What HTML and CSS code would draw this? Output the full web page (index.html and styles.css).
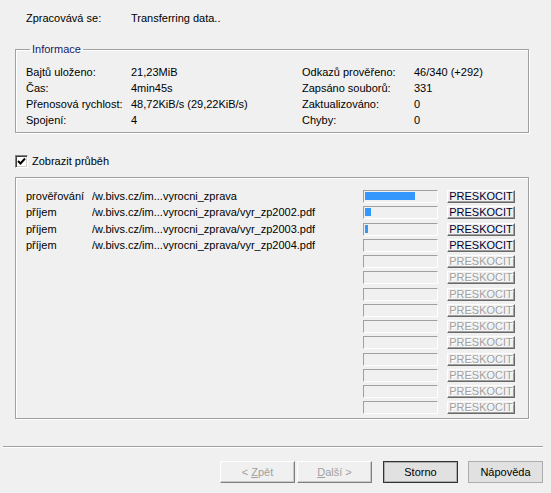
FILE: index.html
```html
<!DOCTYPE html>
<html lang="cs">
<head>
<meta charset="utf-8">
<title>Průběh</title>
<link rel="stylesheet" href="styles.css">
</head>
<body>
<div class="dialog">
  <div class="status"><span class="status-label">Zpracovává se:</span><span>Transferring data..</span></div>

  <fieldset class="info">
    <legend>Informace</legend>
    <div class="info-grid">
      <span>Bajtů uloženo:</span><span>21,23MiB</span><span>Odkazů prověřeno:</span><span>46/340 (+292)</span>
      <span>Čas:</span><span>4min45s</span><span>Zapsáno souborů:</span><span>331</span>
      <span>Přenosová rychlost:</span><span>48,72KiB/s (29,22KiB/s)</span><span>Zaktualizováno:</span><span>0</span>
      <span>Spojení:</span><span>4</span><span>Chyby:</span><span>0</span>
    </div>
  </fieldset>

  <label class="check"><span class="box"><svg width="9" height="9" viewBox="0 0 9 9"><path d="M1 4 L3.5 6.5 L8 1.5" fill="none" stroke="#000" stroke-width="2"/></svg></span>Zobrazit průběh</label>

  <div class="progress">
    <div class="row"><span class="kind">prověřování</span><span class="url">/w.bivs.cz/im...vyrocni_zprava</span><span class="bar"><span class="fill" style="width:50px"></span></span><span class="skip">PRESKOCIT</span></div>
    <div class="row"><span class="kind">příjem</span><span class="url">/w.bivs.cz/im...vyrocni_zprava/vyr_zp2002.pdf</span><span class="bar"><span class="fill" style="width:6px"></span></span><span class="skip">PRESKOCIT</span></div>
    <div class="row"><span class="kind">příjem</span><span class="url">/w.bivs.cz/im...vyrocni_zprava/vyr_zp2003.pdf</span><span class="bar"><span class="fill" style="width:3px"></span></span><span class="skip">PRESKOCIT</span></div>
    <div class="row"><span class="kind">příjem</span><span class="url">/w.bivs.cz/im...vyrocni_zprava/vyr_zp2004.pdf</span><span class="bar"></span><span class="skip">PRESKOCIT</span></div>
    <div class="row"><span class="kind"></span><span class="url"></span><span class="bar"></span><span class="skip off">PRESKOCIT</span></div>
    <div class="row"><span class="kind"></span><span class="url"></span><span class="bar"></span><span class="skip off">PRESKOCIT</span></div>
    <div class="row"><span class="kind"></span><span class="url"></span><span class="bar"></span><span class="skip off">PRESKOCIT</span></div>
    <div class="row"><span class="kind"></span><span class="url"></span><span class="bar"></span><span class="skip off">PRESKOCIT</span></div>
    <div class="row"><span class="kind"></span><span class="url"></span><span class="bar"></span><span class="skip off">PRESKOCIT</span></div>
    <div class="row"><span class="kind"></span><span class="url"></span><span class="bar"></span><span class="skip off">PRESKOCIT</span></div>
    <div class="row"><span class="kind"></span><span class="url"></span><span class="bar"></span><span class="skip off">PRESKOCIT</span></div>
    <div class="row"><span class="kind"></span><span class="url"></span><span class="bar"></span><span class="skip off">PRESKOCIT</span></div>
    <div class="row"><span class="kind"></span><span class="url"></span><span class="bar"></span><span class="skip off">PRESKOCIT</span></div>
    <div class="row"><span class="kind"></span><span class="url"></span><span class="bar"></span><span class="skip off">PRESKOCIT</span></div>
  </div>

  <div class="sep"></div>

  <div class="buttons">
    <span class="btn disabled">&lt; <u>Z</u>pět</span>
    <span class="btn disabled next"><u>D</u>alší &gt;</span>
    <span class="btn default">Storno</span>
    <span class="btn">Nápověda</span>
  </div>
</div>
</body>
</html>
```

FILE: styles.css
```css
* { box-sizing: border-box; }
html, body { margin: 0; padding: 0; }
body {
  width: 551px;
  height: 493px;
  background: #f0f0f0;
  font-family: "Liberation Sans", Arial, sans-serif;
  font-size: 11px;
  color: #000;
  overflow: hidden;
}
.dialog {
  display: flex;
  flex-direction: column;
  height: 493px;
}
.status {
  display: flex;
  padding: 12px 0 0 26px;
  line-height: 13px;
}
.status-label { width: 105px; }

.info {
  margin: 18px 22px 0 15px;
  padding: 8px 0 4px 10px;
  border: 1px solid #a0a0a0;
  box-shadow: inset 1px 1px 0 #fff, 1px 1px 0 #fff;
  min-width: 0;
}
.info legend {
  padding: 0 2px;
  margin-left: 4px;
  line-height: 13px;
  color: #1a1a66;
}
.info-grid {
  display: grid;
  grid-template-columns: 105px 171px 112px 1fr;
  grid-auto-rows: 16px;
  line-height: 16px;
}

.check {
  display: flex;
  align-items: center;
  margin: 22px 0 0 15px;
  height: 13px;
  line-height: 13px;
}
.box {
  width: 13px;
  height: 13px;
  margin-right: 4px;
  background: #fff;
  border-top: 1px solid #808080;
  border-left: 1px solid #808080;
  border-right: 1px solid #fff;
  border-bottom: 1px solid #fff;
  box-shadow: inset 1px 1px 0 #404040, inset -1px -1px 0 #d4d0c8;
  display: flex;
  align-items: center;
  justify-content: center;
}
.box svg { display: block; }

.progress {
  margin: 9px 22px 0 15px;
  height: 242px;
  padding: 12px 0 0 10px;
  border: 1px solid #a0a0a0;
  box-shadow: inset 1px 1px 0 #fff, 1px 1px 0 #fff;
  display: grid;
  grid-auto-rows: 16.25px;
  align-content: start;
}
.row {
  display: grid;
  grid-template-columns: 66px 271px 75px 68px;
  column-gap: 0;
  align-items: start;
  line-height: 13px;
}
.kind, .url { white-space: nowrap; overflow: hidden; }
.row .kind, .row .url { padding-top: 0; }
.bar {
  height: 13px;
  border-top: 1px solid #a0a0a0;
  border-left: 1px solid #a0a0a0;
  border-right: 1px solid #fff;
  border-bottom: 1px solid #fff;
  padding: 1px;
  display: flex;
}
.fill {
  display: block;
  height: 8px;
  background: #3397fb;
}
.skip {
  margin-left: 9px;
  width: 68px;
  height: 13px;
  line-height: 11px;
  font-size: 11px;
  text-align: center;
  color: #000030;
  background: #f0f0f0;
  border-top: 1px solid #fff;
  border-left: 1px solid #fff;
  border-right: 1px solid #696969;
  border-bottom: 1px solid #696969;
  box-shadow: inset -1px -1px 0 #a0a0a0;
  letter-spacing: 0;
}
.skip.off {
  color: #a0a0a0;
  text-shadow: 1px 1px 0 #fff;
}

.sep {
  margin: 27px 8px 0 3px;
  height: 2px;
  border-top: 1px solid #a0a0a0;
  border-bottom: 1px solid #fff;
}
.buttons {
  display: flex;
  justify-content: flex-end;
  padding: 13px 8px 0 0;
  gap: 10px;
}
.btn {
  width: 75px;
  height: 22px;
  line-height: 20px;
  text-align: center;
  background: #e1e1e1;
  border: 1px solid #adadad;
}
.btn u { text-decoration: underline; }
.btn.disabled {
  color: #a0a0a0;
  background: #f0f0f0;
  border-top: 1px solid #fff;
  border-left: 1px solid #fff;
  border-right: 1px solid #808080;
  border-bottom: 1px solid #808080;
  box-shadow: inset -1px -1px 0 #c8c8c8;
}
.btn.next { margin-left: -8px; margin-right: 1px; }
.btn.default {
  border: 1px solid #333;
  box-shadow: inset 0 0 0 1px #adadad;
}
```
